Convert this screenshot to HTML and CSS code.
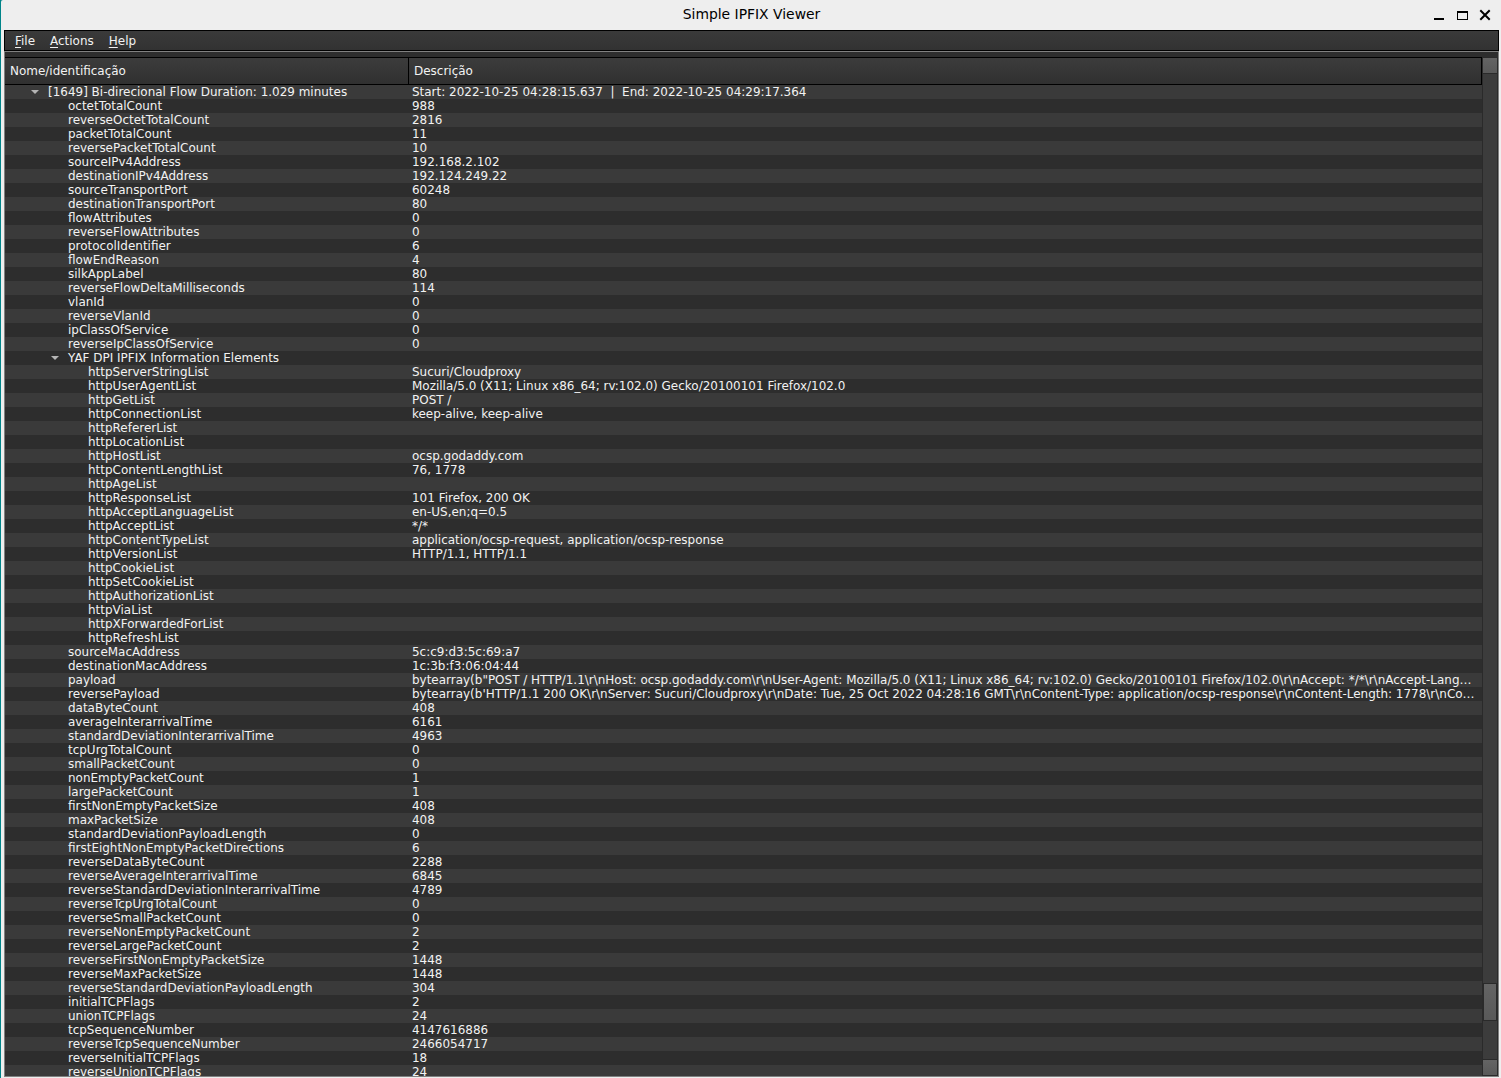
FILE: index.html
```html
<!DOCTYPE html>
<html lang="pt">
<head>
<meta charset="utf-8">
<title>Simple IPFIX Viewer</title>
<link rel="stylesheet" href="styles.css">
</head>
<body>
<div class="window">
<header class="titlebar">
<h1 class="title">Simple IPFIX Viewer</h1>
<svg class="controls" width="60" height="30" viewBox="0 0 60 30" shape-rendering="crispEdges">
<path d="M2 18h10v2H2z"/>
<path fill-rule="evenodd" d="M25 11h11v9H25zM26 13v6h9v-6z"/>
<path d="M49 11L57 19M57 11L49 19" fill="none" stroke="#000" stroke-width="2" shape-rendering="auto" stroke-linecap="square"/>
</svg>
</header>
<nav class="menubar">
<span class="menu"><u>F</u>ile</span>
<span class="menu"><u>A</u>ctions</span>
<span class="menu"><u>H</u>elp</span>
</nav>
<main class="frame">
<section class="tree">
<div class="head"><span class="name">Nome/identificação</span><span class="desc">Descrição</span></div>
<div class="rows">
<div class="row l0"><span class="key"><i class="arrow"></i>[1649] Bi-direcional Flow Duration: 1.029 minutes</span><span class="val">Start: 2022-10-25 04:28:15.637  |  End: 2022-10-25 04:29:17.364</span></div>
<div class="row"><span class="key">octetTotalCount</span><span class="val">988</span></div>
<div class="row"><span class="key">reverseOctetTotalCount</span><span class="val">2816</span></div>
<div class="row"><span class="key">packetTotalCount</span><span class="val">11</span></div>
<div class="row"><span class="key">reversePacketTotalCount</span><span class="val">10</span></div>
<div class="row"><span class="key">sourceIPv4Address</span><span class="val">192.168.2.102</span></div>
<div class="row"><span class="key">destinationIPv4Address</span><span class="val">192.124.249.22</span></div>
<div class="row"><span class="key">sourceTransportPort</span><span class="val">60248</span></div>
<div class="row"><span class="key">destinationTransportPort</span><span class="val">80</span></div>
<div class="row"><span class="key">flowAttributes</span><span class="val">0</span></div>
<div class="row"><span class="key">reverseFlowAttributes</span><span class="val">0</span></div>
<div class="row"><span class="key">protocolIdentifier</span><span class="val">6</span></div>
<div class="row"><span class="key">flowEndReason</span><span class="val">4</span></div>
<div class="row"><span class="key">silkAppLabel</span><span class="val">80</span></div>
<div class="row"><span class="key">reverseFlowDeltaMilliseconds</span><span class="val">114</span></div>
<div class="row"><span class="key">vlanId</span><span class="val">0</span></div>
<div class="row"><span class="key">reverseVlanId</span><span class="val">0</span></div>
<div class="row"><span class="key">ipClassOfService</span><span class="val">0</span></div>
<div class="row"><span class="key">reverseIpClassOfService</span><span class="val">0</span></div>
<div class="row"><span class="key"><i class="arrow"></i>YAF DPI IPFIX Information Elements</span><span class="val"></span></div>
<div class="row l2"><span class="key">httpServerStringList</span><span class="val">Sucuri/Cloudproxy</span></div>
<div class="row l2"><span class="key">httpUserAgentList</span><span class="val">Mozilla/5.0 (X11; Linux x86_64; rv:102.0) Gecko/20100101 Firefox/102.0</span></div>
<div class="row l2"><span class="key">httpGetList</span><span class="val">POST /</span></div>
<div class="row l2"><span class="key">httpConnectionList</span><span class="val">keep-alive, keep-alive</span></div>
<div class="row l2"><span class="key">httpRefererList</span><span class="val"></span></div>
<div class="row l2"><span class="key">httpLocationList</span><span class="val"></span></div>
<div class="row l2"><span class="key">httpHostList</span><span class="val">ocsp.godaddy.com</span></div>
<div class="row l2"><span class="key">httpContentLengthList</span><span class="val">76, 1778</span></div>
<div class="row l2"><span class="key">httpAgeList</span><span class="val"></span></div>
<div class="row l2"><span class="key">httpResponseList</span><span class="val">101 Firefox, 200 OK</span></div>
<div class="row l2"><span class="key">httpAcceptLanguageList</span><span class="val">en-US,en;q=0.5</span></div>
<div class="row l2"><span class="key">httpAcceptList</span><span class="val">*/*</span></div>
<div class="row l2"><span class="key">httpContentTypeList</span><span class="val">application/ocsp-request, application/ocsp-response</span></div>
<div class="row l2"><span class="key">httpVersionList</span><span class="val">HTTP/1.1, HTTP/1.1</span></div>
<div class="row l2"><span class="key">httpCookieList</span><span class="val"></span></div>
<div class="row l2"><span class="key">httpSetCookieList</span><span class="val"></span></div>
<div class="row l2"><span class="key">httpAuthorizationList</span><span class="val"></span></div>
<div class="row l2"><span class="key">httpViaList</span><span class="val"></span></div>
<div class="row l2"><span class="key">httpXForwardedForList</span><span class="val"></span></div>
<div class="row l2"><span class="key">httpRefreshList</span><span class="val"></span></div>
<div class="row"><span class="key">sourceMacAddress</span><span class="val">5c:c9:d3:5c:69:a7</span></div>
<div class="row"><span class="key">destinationMacAddress</span><span class="val">1c:3b:f3:06:04:44</span></div>
<div class="row"><span class="key">payload</span><span class="val">bytearray(b"POST / HTTP/1.1\r\nHost: ocsp.godaddy.com\r\nUser-Agent: Mozilla/5.0 (X11; Linux x86_64; rv:102.0) Gecko/20100101 Firefox/102.0\r\nAccept: */*\r\nAccept-Lang…</span></div>
<div class="row"><span class="key">reversePayload</span><span class="val">bytearray(b'HTTP/1.1 200 OK\r\nServer: Sucuri/Cloudproxy\r\nDate: Tue, 25 Oct 2022 04:28:16 GMT\r\nContent-Type: application/ocsp-response\r\nContent-Length: 1778\r\nCo…</span></div>
<div class="row"><span class="key">dataByteCount</span><span class="val">408</span></div>
<div class="row"><span class="key">averageInterarrivalTime</span><span class="val">6161</span></div>
<div class="row"><span class="key">standardDeviationInterarrivalTime</span><span class="val">4963</span></div>
<div class="row"><span class="key">tcpUrgTotalCount</span><span class="val">0</span></div>
<div class="row"><span class="key">smallPacketCount</span><span class="val">0</span></div>
<div class="row"><span class="key">nonEmptyPacketCount</span><span class="val">1</span></div>
<div class="row"><span class="key">largePacketCount</span><span class="val">1</span></div>
<div class="row"><span class="key">firstNonEmptyPacketSize</span><span class="val">408</span></div>
<div class="row"><span class="key">maxPacketSize</span><span class="val">408</span></div>
<div class="row"><span class="key">standardDeviationPayloadLength</span><span class="val">0</span></div>
<div class="row"><span class="key">firstEightNonEmptyPacketDirections</span><span class="val">6</span></div>
<div class="row"><span class="key">reverseDataByteCount</span><span class="val">2288</span></div>
<div class="row"><span class="key">reverseAverageInterarrivalTime</span><span class="val">6845</span></div>
<div class="row"><span class="key">reverseStandardDeviationInterarrivalTime</span><span class="val">4789</span></div>
<div class="row"><span class="key">reverseTcpUrgTotalCount</span><span class="val">0</span></div>
<div class="row"><span class="key">reverseSmallPacketCount</span><span class="val">0</span></div>
<div class="row"><span class="key">reverseNonEmptyPacketCount</span><span class="val">2</span></div>
<div class="row"><span class="key">reverseLargePacketCount</span><span class="val">2</span></div>
<div class="row"><span class="key">reverseFirstNonEmptyPacketSize</span><span class="val">1448</span></div>
<div class="row"><span class="key">reverseMaxPacketSize</span><span class="val">1448</span></div>
<div class="row"><span class="key">reverseStandardDeviationPayloadLength</span><span class="val">304</span></div>
<div class="row"><span class="key">initialTCPFlags</span><span class="val">2</span></div>
<div class="row"><span class="key">unionTCPFlags</span><span class="val">24</span></div>
<div class="row"><span class="key">tcpSequenceNumber</span><span class="val">4147616886</span></div>
<div class="row"><span class="key">reverseTcpSequenceNumber</span><span class="val">2466054717</span></div>
<div class="row"><span class="key">reverseInitialTCPFlags</span><span class="val">18</span></div>
<div class="row"><span class="key">reverseUnionTCPFlags</span><span class="val">24</span></div>
</div>
</section>
<aside class="scrollbar">
<div class="btn up"></div>
<div class="track"><div class="thumb"></div></div>
<div class="btn down"></div>
</aside>
</main>
</div>
</body>
</html>
```
FILE: styles.css
```css
* { box-sizing: border-box; }
body {
  margin: 0;
  background: #008489;
  font: 11.985px/14px "DejaVu Sans", sans-serif;
  color: #f2f2f2;
}
.window {
  display: flex;
  flex-direction: column;
  height: 1078px;
  margin-left: 1px;
  padding: 0 2px 1px 3px;
  background: #eee;
  border-top-left-radius: 2px;
  overflow: hidden;
}
.titlebar {
  display: grid;
  grid-template-columns: 1fr auto 1fr;
  flex: none;
  height: 30px;
  color: #000;
}
.title {
  grid-column: 2;
  margin: 0;
  font-size: 13.9px;
  font-weight: 400;
  line-height: 28px;
}
.controls { justify-self: end; margin-right: 7px; }
.menubar {
  display: flex;
  gap: 15px;
  flex: none;
  height: 21px;
  padding: 3px 10px;
  border: 1px solid #000;
  background: linear-gradient(#3a3a3a, #323232);
}
.menu u { text-underline-offset: 2px; text-decoration-thickness: 1px; }
.frame {
  display: flex;
  flex: 1;
  min-height: 0;
  padding-top: 5px;
  border: 1px solid #808080;
  background: #2d2d2d;
}
.tree {
  display: flex;
  flex-direction: column;
  width: 1477px;
  overflow: hidden;
}
.head {
  display: flex;
  flex: none;
  height: 28px;
  line-height: 26px;
  border: solid #000;
  border-width: 1px 1px 1px 0;
  background: linear-gradient(#3c3c3c, #303030);
}
.name { width: 404px; padding-left: 5px; border-right: 1px solid #000; }
.desc { padding-left: 5px; }
.rows { flex: 1; min-height: 0; overflow: hidden; }
.row {
  display: flex;
  height: 14px;
  padding-left: 63px;
  background: #2d2d2d;
  white-space: pre;
}
.row:nth-child(odd) { background: #3a3a3a; }
.key { width: 344px; }
.l0 { padding-left: 43px; }
.l0 .key { width: 364px; }
.l2 { padding-left: 83px; }
.l2 .key { width: 324px; }
.arrow {
  display: inline-block;
  width: 8px;
  height: 4px;
  margin: 0 9px 2px -17px;
  background: #b4b4b4;
  clip-path: polygon(0 0, 100% 0, 50% 100%);
}
.scrollbar {
  display: flex;
  flex-direction: column;
  flex: 1;
  border: 1px solid #2a2a2a;
  background: #3c3c3c;
}
.btn { height: 16px; background: linear-gradient(#646464, #595959); }
.up { border-bottom: 1px solid #2a2a2a; }
.down { border-top: 1px solid #2a2a2a; }
.track { flex: 1; padding-top: 909px; }
.thumb {
  height: 38px;
  border: 1px solid #2a2a2a;
  background: linear-gradient(#646464, #595959);
}
```
